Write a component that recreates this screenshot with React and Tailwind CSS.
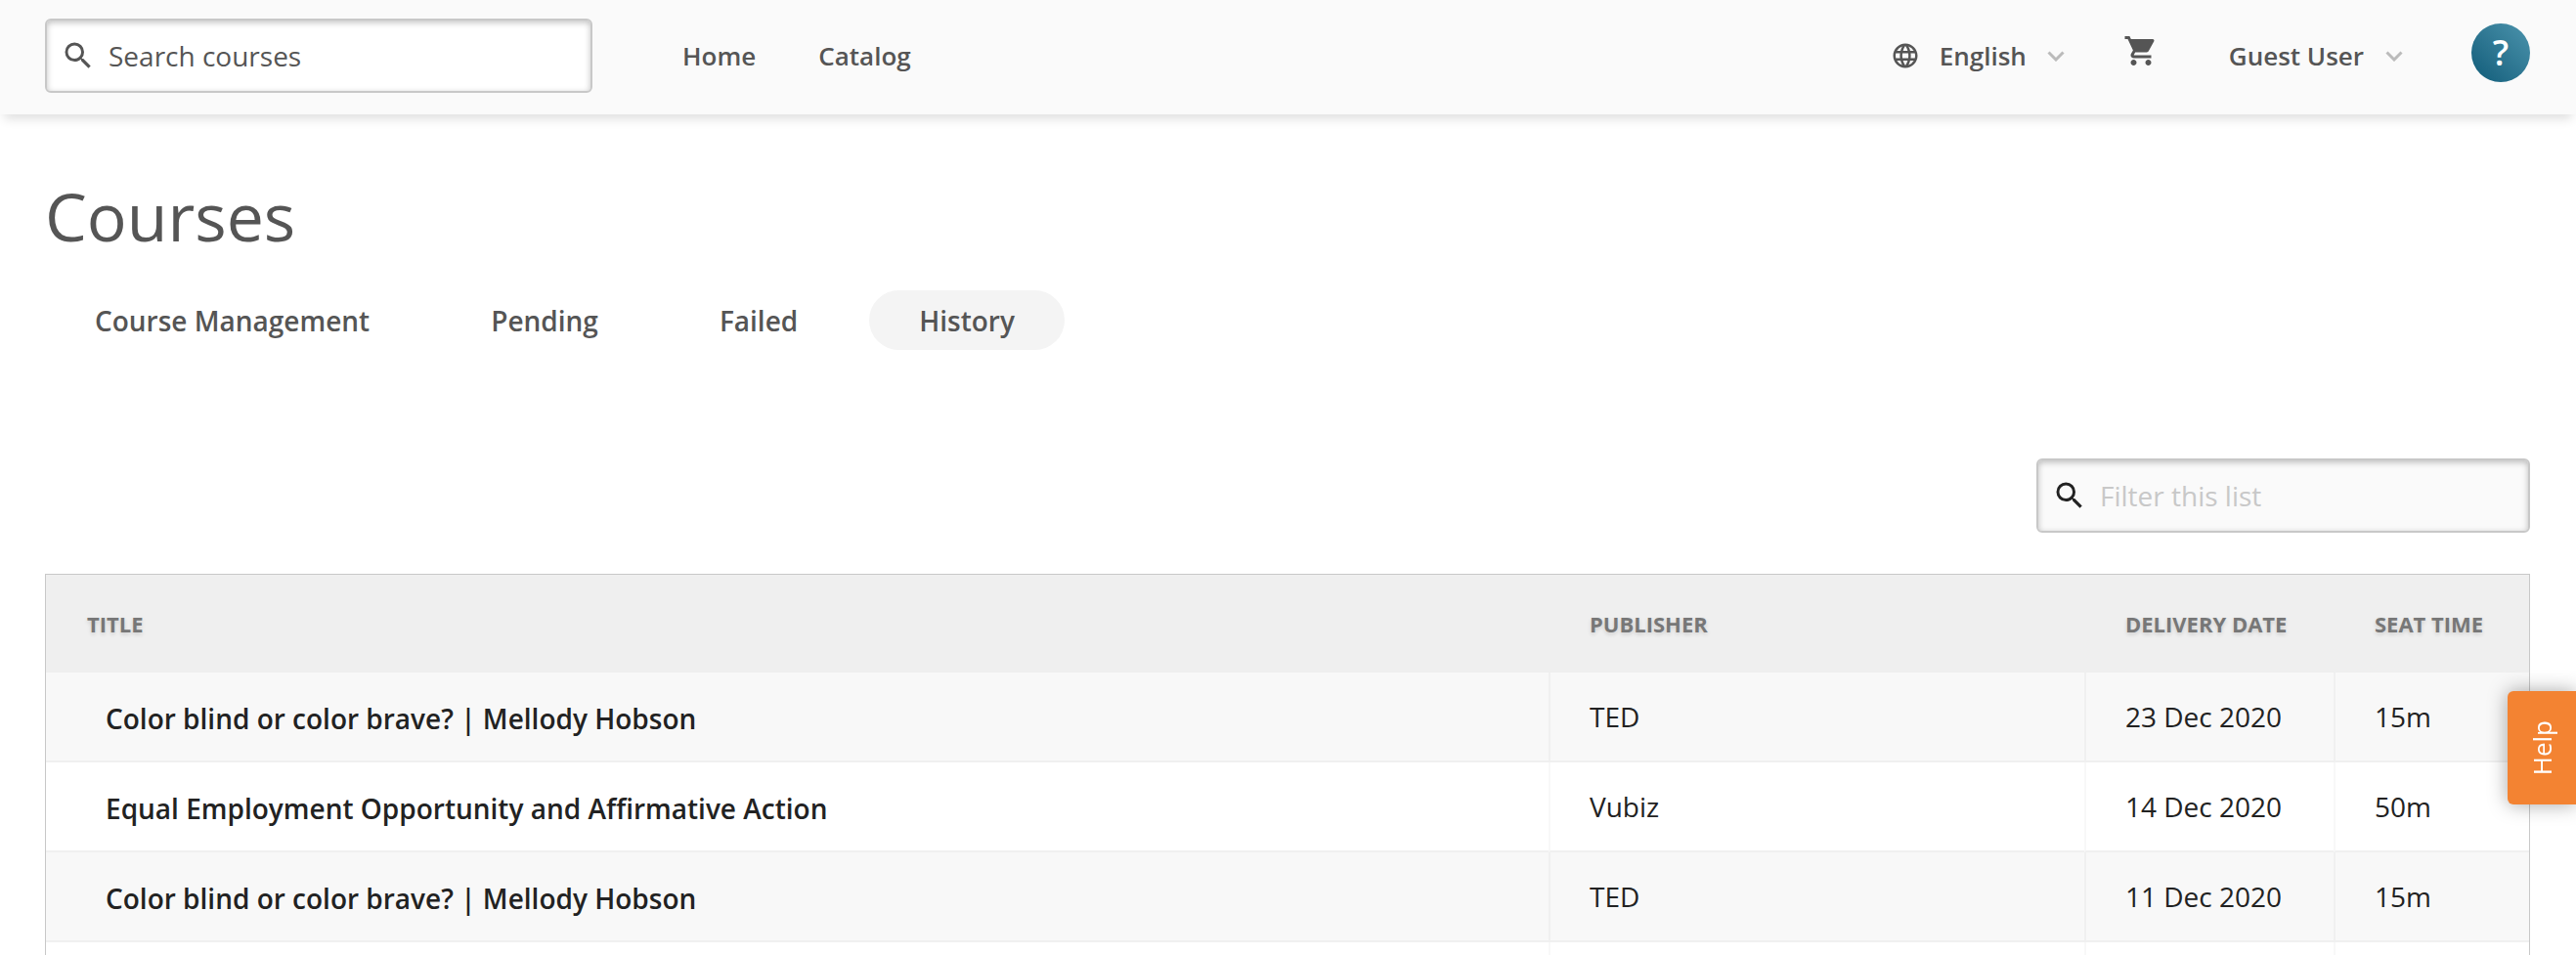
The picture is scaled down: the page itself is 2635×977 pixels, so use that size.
import { useState } from "react";
import { MdLanguage, MdSearch, MdShoppingCart } from "react-icons/md";

const NAV = ["Home", "Catalog"];
const TABS = ["Course Management", "Pending", "Failed", "History"];

const COURSES = [
  { id: 1, title: "Color blind or color brave? | Mellody Hobson", publisher: "TED", date: "23 Dec 2020", seat: "15m" },
  { id: 2, title: "Equal Employment Opportunity and Affirmative Action", publisher: "Vubiz", date: "14 Dec 2020", seat: "50m" },
  { id: 3, title: "Color blind or color brave? | Mellody Hobson", publisher: "TED", date: "11 Dec 2020", seat: "15m" },
  { id: 4, title: "", publisher: "", date: "", seat: "" },
];

function Chevron() {
  return (
    <svg viewBox="0 0 18 11" className="w-[18px] h-[11px] text-[#bbb] shrink-0" fill="none" stroke="currentColor" strokeWidth="3" aria-hidden="true">
      <path d="M1.5 1.5l7.5 7.5 7.5-7.5" />
    </svg>
  );
}

function SearchBox({ label, value, onChange, className, iconClass, inputClass }) {
  return (
    <label className={`flex items-center h-[76px] pl-[14px] pr-4 border-2 border-[#c8c8c8] rounded-md shadow-[inset_0_2px_6px_rgba(0,0,0,0.25)] ${className}`}>
      <MdSearch className={`size-9 shrink-0 ${iconClass}`} />
      <input
        type="text"
        aria-label={label}
        placeholder={label}
        value={value}
        onChange={e => onChange(e.target.value)}
        className={`flex-1 min-w-0 ml-[13px] bg-transparent outline-none text-[28px] leading-10 ${inputClass}`}
      />
    </label>
  );
}

function Header() {
  const [search, setSearch] = useState("");
  return (
    <header className="relative flex items-center justify-between h-[117px] pb-[3px] pl-[46px] pr-[47px] bg-[#fafafa] shadow-[0_9px_10px_-4px_rgba(0,0,0,0.12)]">
      <div className="flex items-center">
        <SearchBox
          label="Search courses"
          value={search}
          onChange={setSearch}
          className="w-[560px] bg-white"
          iconClass="text-[#555]"
          inputClass="text-[#555] placeholder:text-[#555]"
        />
        <nav className="flex gap-16 ml-[92px] text-[26px] leading-9 font-semibold">
          {NAV.map(item => <a key={item} href="#">{item}</a>)}
        </nav>
      </div>

      <div className="flex items-center text-[26px] leading-9 font-semibold">
        <div className="flex items-center">
          <MdLanguage className="size-[30px]" />
          <select aria-label="Language" className="appearance-none bg-transparent ml-5 mr-5">
            <option>English</option>
          </select>
          <Chevron />
        </div>
        <button aria-label="Cart" className="ml-[60px] mb-2.5">
          <MdShoppingCart className="size-9" />
        </button>
        <button className="flex items-center gap-[22px] ml-[72px]">
          Guest User
          <Chevron />
        </button>
        <button
          aria-label="Profile"
          className="flex items-center justify-center size-[60px] ml-[70px] mb-1.5 rounded-full bg-linear-to-tr from-[#0d5c79] to-[#4b94ad] text-white text-4xl"
        >
          ?
        </button>
      </div>
    </header>
  );
}

function CourseRow({ course }) {
  const cell = "border-b-2 border-b-[#f0f0f0] border-l-2 border-l-[#f8f8f8] group-odd:border-l-[#f0f0f0] pl-10";
  return (
    <tr className="group h-[92px] odd:bg-[#f8f8f8]">
      <td className="border-b-2 border-b-[#f0f0f0] pl-[61px] pt-[3px]">
        <a href="#" className="font-semibold">{course.title}</a>
      </td>
      <td className={cell}>{course.publisher}</td>
      <td className={cell}>{course.date}</td>
      <td className={cell}>{course.seat}</td>
    </tr>
  );
}

export default function App() {
  const [tab, setTab] = useState("History");
  const [filter, setFilter] = useState("");

  const rows = COURSES.filter(c => c.title.toLowerCase().includes(filter.toLowerCase()));

  return (
    <div className="h-screen overflow-hidden bg-white text-[#555] font-['Open_Sans',sans-serif]">
      <Header />

      <main className="pl-[46px] pr-[47px] pt-[59px]">
        <h1 className="text-[68px] leading-[90px]">Courses</h1>

        {/* Tabs */}
        <div role="tablist" className="flex gap-[22px] mt-[31px]">
          {TABS.map(t => (
            <button
              key={t}
              role="tab"
              aria-selected={tab === t}
              onClick={() => setTab(t)}
              className={`h-[61px] px-[51px] rounded-full text-[28px] leading-10 font-semibold ${tab === t ? "bg-[#f4f4f4]" : ""}`}
            >
              {t}
            </button>
          ))}
        </div>

        <div className="flex justify-end mt-[111px]">
          <SearchBox
            label="Filter this list"
            value={filter}
            onChange={setFilter}
            className="w-[505px] bg-[#fafafa]"
            iconClass="text-[#222]"
            inputClass="text-[#222] placeholder:text-[#c8c8c8]"
          />
        </div>

        {/* Course history */}
        <table className="w-full mt-[42px] table-fixed border-separate border-spacing-0 border border-b-0 border-[#c8c8c8] text-left text-[28px] leading-10 text-[#222]">
          <colgroup>
            <col />
            <col className="w-[548px]" />
            <col className="w-[255px]" />
            <col className="w-[200px]" />
          </colgroup>
          <thead>
            <tr className="h-[100px] bg-[#efefef] text-[22px] leading-8 uppercase text-[#777] text-shadow-[0_2px_4px_rgba(0,0,0,0.15)]">
              <th className="pl-[42px] font-bold">Title</th>
              <th className="pl-[42px] font-bold">Publisher</th>
              <th className="pl-[42px] font-bold">Delivery date</th>
              <th className="pl-[42px] font-bold">Seat time</th>
            </tr>
          </thead>
          <tbody>
            {rows.map(c => <CourseRow key={c.id} course={c} />)}
          </tbody>
        </table>
      </main>

      {/* Help tab stuck to the right edge */}
      <button className="fixed right-0 bottom-[154px] flex items-center justify-center w-[70px] h-[116px] rounded-l-md bg-[#f38332] text-white text-[26px] leading-9 shadow-[0_0_20px_rgba(0,0,0,0.35)]">
        <span className="[writing-mode:vertical-rl] rotate-180">Help</span>
      </button>
    </div>
  );
}
